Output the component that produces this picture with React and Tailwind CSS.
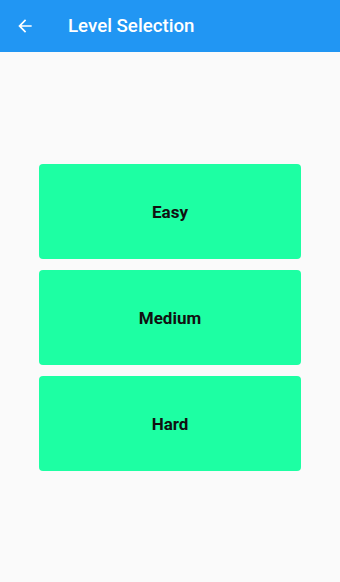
import React from 'react';

const levels = ['Easy', 'Medium', 'Hard'];

const App = () => {
    return (
        <div className="w-[340px] h-[582px] flex flex-col bg-[#fafafa]" style={{ fontFamily: 'Roboto, "Noto Sans", sans-serif' }}>
            <div className="h-[52px] shrink-0 bg-[#2196f3] flex items-center text-white">
                <svg className="ml-[15px] w-[20px] h-[20px]" viewBox="0 0 24 24" fill="white">
                    <path d="M20 11H7.83l5.59-5.59L12 4l-8 8 8 8 1.41-1.41L7.83 13H20v-2z" />
                </svg>
                <h1 className="ml-[33px] text-[18.7px] font-medium">Level Selection</h1>
            </div>
            <div className="flex-1 flex flex-col justify-center px-[39px] gap-[11px] pt-[1px]">
                {levels.map(level => (
                    <button
                        key={level}
                        type="button"
                        className="h-[95px] w-full rounded-[4px] bg-[#1dffa3] text-[17px] font-bold text-[#111] flex items-center justify-center pt-[3px]"
                    >
                        {level}
                    </button>
                ))}
            </div>
        </div>
    );
};

export default App;
